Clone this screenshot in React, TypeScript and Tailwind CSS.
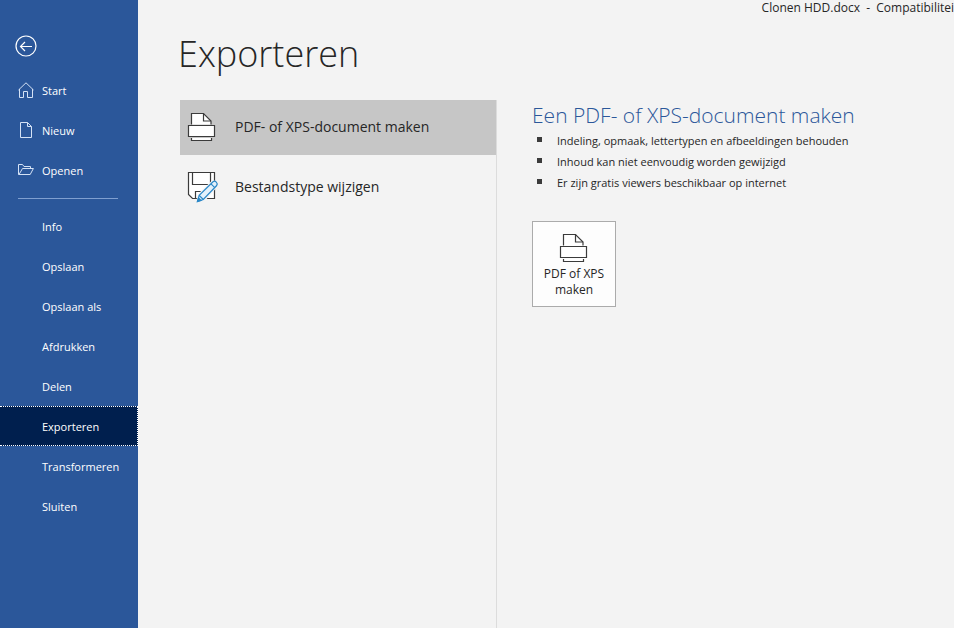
import { useState } from 'react';
import type { ReactNode } from 'react';

const primaryItems = [
  { label: 'Start', icon: <HomeIcon /> },
  { label: 'Nieuw', icon: <PageIcon /> },
  { label: 'Openen', icon: <FolderIcon /> },
];

const secondaryItems = [
  'Info',
  'Opslaan',
  'Opslaan als',
  'Afdrukken',
  'Delen',
  'Exporteren',
  'Transformeren',
  'Sluiten',
];

const exportOptions = [
  { label: 'PDF- of XPS-document maken', icon: <PrintIcon /> },
  { label: 'Bestandstype wijzigen', icon: <SaveEditIcon /> },
];

const benefits = [
  'Indeling, opmaak, lettertypen en afbeeldingen behouden',
  'Inhoud kan niet eenvoudig worden gewijzigd',
  'Er zijn gratis viewers beschikbaar op internet',
];

function BackIcon() {
  return (
    <svg width="22" height="22" viewBox="0 0 22 22" fill="none" stroke="#fff" strokeWidth="1.2">
      <circle cx="11" cy="11" r="10" />
      <path d="M17 11.500H5.500M10 7l-4.500 4.500L10 16" />
    </svg>
  );
}

function HomeIcon() {
  return (
    <svg width="16" height="16" viewBox="0 0 16 16" fill="none" stroke="#d5e2f5">
      <path d="M.5 8L8 .8 15.5 8M1.500 7v8.500h4v-6h4v6h5V7" />
    </svg>
  );
}

function PageIcon() {
  return (
    <svg width="16" height="16" viewBox="0 0 16 16" fill="none" stroke="#d5e2f5">
      <path d="M2.500.5h7l4 4v11h-11zM9.500.5v4h4" />
    </svg>
  );
}

function FolderIcon() {
  return (
    <svg width="16" height="16" viewBox="0 0 16 16" fill="none" stroke="#d5e2f5">
      <path d="M.5 12.500v-10h4l1.500 2h6.500v2M.5 12.500h11.700l3.200-6H4.500L1 12.500" />
    </svg>
  );
}

function PrintIcon() {
  return (
    <svg width="30" height="30" viewBox="0 0 30 30" stroke="#3b3b3b" strokeWidth="1.2">
      <path d="M4.500 12.500V1.500h12l7.500 7.500v3.500" fill="#fff" />
      <path d="M16.500 1.500v7.500H24" fill="none" />
      <path d="M4.500 26v2.500h20V26" fill="#fff" />
      <path d="M1.500 13.500h26v11h-26z" fill="#fff" />
    </svg>
  );
}

function SaveEditIcon() {
  return (
    <svg width="32" height="32" viewBox="0 0 32 32" fill="none" stroke="#3b3b3b" strokeWidth="1.2">
      <path d="M1.500 1.500h26v26h-22l-4-4z" fill="#fff" />
      <path d="M5.500 1.500v12h18v-12M8.500 27.500v-7h11M12.500 27.500v-3" />
      <path d="M9 31l2-8L25 9.500l6 .5v5L17 31z" fill="#f3f3f3" stroke="none" />
      <path
        d="M10.500 30.500l1.700-6.200L26 10.800c2.200-1.700 5.300 1.400 3.700 3.700L16.300 28.500z"
        fill="#e3f1fb"
        stroke="#2b88c8"
      />
      <path d="M12.200 24.300l4.100 4.200M24 12.800l3.800 3.800" stroke="#2b88c8" />
      <path d="M10.500 30.500l1-3.500 2.500 2.500z" fill="#2b88c8" stroke="#2b88c8" />
    </svg>
  );
}

interface NavItemProps {
  label: string;
  icon?: ReactNode;
  active: boolean;
  onSelect: (label: string) => void;
}

function NavItem({ label, icon, active, onSelect }: NavItemProps) {
  return (
    <li>
      <button
        type="button"
        onClick={() => onSelect(label)}
        className={`flex h-10 w-full items-center gap-2 border border-l-0 pl-[18px] text-left ${
          active ? 'border-dotted border-white bg-[#001f4e]' : 'border-transparent'
        }`}
      >
        <span className="w-4">{icon}</span>
        <span className="pt-[2px]">{label}</span>
      </button>
    </li>
  );
}

export default function App() {
  const [page, setPage] = useState('Exporteren');
  const [option, setOption] = useState(exportOptions[0].label);

  return (
    <div className="flex min-h-screen bg-[#f3f3f3] font-['Open_Sans','Noto_Sans',sans-serif] text-xs text-[#262626]">
      <nav className="w-[138px] shrink-0 bg-[#2b579a] pt-[35px] text-[11px] text-white">
        <button type="button" aria-label="Terug" className="ml-[15px] block">
          <BackIcon />
        </button>
        <ul className="mt-[13px]">
          {primaryItems.map((item) => (
            <NavItem key={item.label} {...item} active={page === item.label} onSelect={setPage} />
          ))}
        </ul>
        <hr className="mt-2 mr-5 mb-[7px] ml-[18px] border-[#7f9fd0]" />
        <ul>
          {secondaryItems.map((label) => (
            <NavItem key={label} label={label} active={page === label} onSelect={setPage} />
          ))}
        </ul>
      </nav>

      <div className="flex min-w-0 flex-1 flex-col">
        <header className="text-right leading-4 whitespace-pre">
          Clonen HDD.docx  -  Compatibilitei
        </header>
        <h1 className="mt-3 pl-10 text-4xl leading-[52px] font-light">Exporteren</h1>

        <main className="mt-5 flex flex-1 pl-[42px]">
          <div className="flex w-[317px] shrink-0 flex-col gap-[5px] border-r border-[#dcdcdc]">
            {exportOptions.map(({ label, icon }) => (
              <button
                key={label}
                type="button"
                onClick={() => setOption(label)}
                className={`flex h-[55px] items-center gap-4 pb-[2px] pl-[7px] text-left text-sm ${
                  option === label ? 'bg-[#c6c6c6]' : ''
                }`}
              >
                <span className="w-8">{icon}</span>
                {label}
              </button>
            ))}
          </div>

          <section className="min-w-0 flex-1 pl-[35px]">
            <h2 className="text-[21px] leading-[30px] font-light text-[#2b579a]">
              Een PDF- of XPS-document maken
            </h2>
            <ul className="text-[11px]">
              {benefits.map((text) => (
                <li key={text} className="flex h-[21px] items-center gap-[15px] pl-[5px]">
                  <span className="mb-[2px] size-[5px] bg-[#3b3b3b]" />
                  <span className="pt-[2px]">{text}</span>
                </li>
              ))}
            </ul>
            <button
              type="button"
              className="mt-7 flex h-[86px] w-[84px] flex-col items-center justify-center gap-[3px] border border-[#ababab] bg-[#fdfdfd] pt-[2px] leading-4"
            >
              <PrintIcon />
              <span>
                PDF of XPS
                <br />
                maken
              </span>
            </button>
          </section>
        </main>
      </div>
    </div>
  );
}
